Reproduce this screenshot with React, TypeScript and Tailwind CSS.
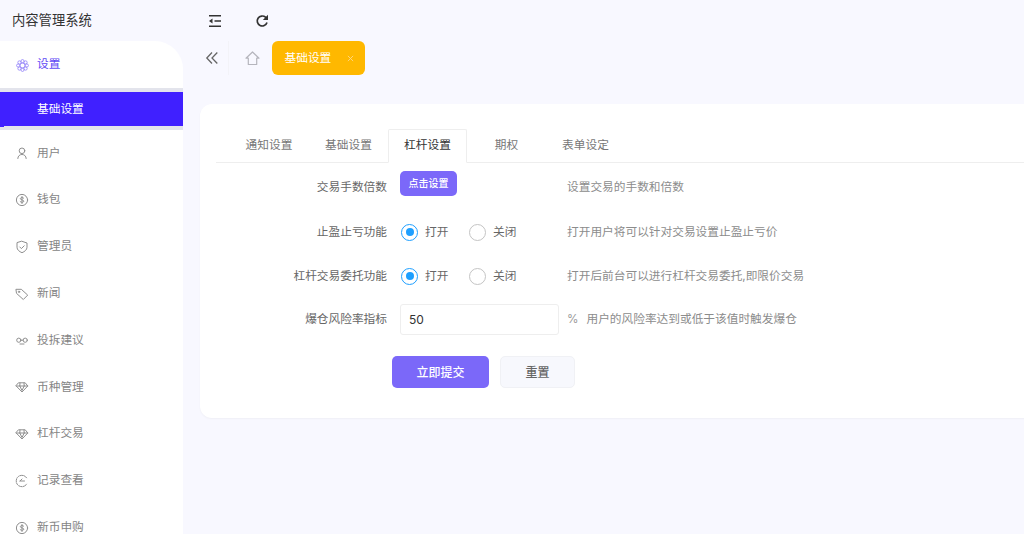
import type { ReactNode } from "react";

const s = { fill: "none", stroke: "currentColor", strokeWidth: 1, strokeLinecap: "round" as const, strokeLinejoin: "round" as const };
const Ico = ({ children, cls = "text-[#8f8f8f]" }: { children: ReactNode; cls?: string }) => (
  <svg viewBox="0 0 14 14" className={`w-[14px] h-[14px] shrink-0 ${cls}`} {...s}>{children}</svg>
);
const Dollar = () => (
  <Ico><circle cx="7" cy="7" r="5.600" /><path d="M8.800 5.200c-.4-.8-3.400-1.100-3.500.5 0 1.500 3.500.9 3.500 2.500 0 1.500-3.100 1.400-3.700.4M7 3.500v7" /></Ico>
);
const Diamond = () => (
  <Ico><path d="M3.800 2.800h6.400L12.800 6 7 12 1.200 6zM1.200 6h11.600M4.800 6 7 10.500 9.200 6M5 3 4.800 6M9 3l.2 3" /></Ico>
);

const items: { t: string; i: ReactNode }[] = [
  { t: "用户", i: <Ico><circle cx="7" cy="4.800" r="2.800" /><path d="M2.800 12.500c0-5.500 8.400-5.500 8.400 0" /></Ico> },
  { t: "钱包", i: <Dollar /> },
  { t: "管理员", i: <Ico><path d="M7 1.300 12 3v4.200c0 2.600-2.300 4.400-5 5.500-2.700-1.100-5-2.900-5-5.500V3z" /><path d="m4.800 7 1.600 1.600 2.800-2.800" /></Ico> },
  { t: "新闻", i: <Ico><path d="M1.300 2.300h5l6.400 5.800-4.400 4.400-6.500-5.900z" /><circle cx="4" cy="4.800" r=".7" /></Ico> },
  { t: "投拆建议", i: <Ico><circle cx="3.800" cy="6.200" r="2.100" /><circle cx="10.200" cy="6.200" r="2.100" /><path d="M5.900 6.200h2.200M5 10h4" /></Ico> },
  { t: "币种管理", i: <Diamond /> },
  { t: "杠杆交易", i: <Diamond /> },
  { t: "记录查看", i: <Ico><path d="M11.600 3.800A5.700 5.700 0 1 0 11.600 10.200" strokeDasharray="3 1" /><path d="M5 7h4.500M7 5 5 7" /></Ico> },
  { t: "新币申购", i: <Dollar /> },
];

const petals = [0, 45, 90, 135, 180, 225, 270, 315];

const Radio = ({ on, label }: { on?: boolean; label: string }) => (
  <label className="flex items-center">
    <span className={`w-[17px] h-[17px] rounded-full border-[1.3px] flex items-center justify-center bg-white ${on ? "border-[#1e9fff]" : "border-[#c4c4c4]"}`}>
      {on && <span className="w-[8px] h-[8px] rounded-full bg-[#1e9fff]" />}
    </span>
    <span className="ml-[7px] w-[44px] text-[#666]">{label}</span>
  </label>
);

const Row = ({ label, tip, children, cls }: { label: string; tip?: ReactNode; children: ReactNode; cls: string }) => (
  <div className={`flex items-center ${cls}`}>
    <div className="w-[171px] text-right text-[#666] shrink-0">{label}</div>
    <div className="ml-[13px] w-[167px] shrink-0 flex items-center">{children}</div>
    <div className="text-[#8c8c8c] whitespace-nowrap">{tip}</div>
  </div>
);

export default function App() {
  return (
    <div className="w-[1024px] h-[534px] overflow-hidden flex bg-[#f8f8ff] text-[11.7px] font-['Inter','Noto_Sans_CJK_SC',sans-serif]">
      <aside className="w-[183px] shrink-0 flex flex-col h-full overflow-hidden">
        <div className="h-[41px] shrink-0 pl-[12px] flex items-center text-[13.300px] text-[#333]">内容管理系统</div>
        <div className="bg-white rounded-tr-[28px] flex-1">
          <div className="h-[47px] flex items-center pl-[16px] pt-[1px] text-[#5f49f5]">
            <svg viewBox="0 0 14 14" className="w-[13px] h-[13px] shrink-0 text-[#8a78f8]" fill="none" stroke="currentColor" strokeWidth="0.800">
              <circle cx="7" cy="7" r="2.600" />
              {petals.map((a) => (
                <circle key={a} cx={7 + 4.7 * Math.cos((a * Math.PI) / 180)} cy={7 + 4.7 * Math.sin((a * Math.PI) / 180)} r="1.700" />
              ))}
            </svg>
            <span className="ml-[8px]">设置</span>
          </div>
          <div className="relative border-y-[4px] border-[#e3e4ec]">
            <div className="h-[34px] bg-[#4020ff] text-white flex items-center pl-[37px] pt-[2px]">基础设置</div>
            <span className="absolute left-0 -bottom-[1px] w-[4px] h-[1px] bg-[#4020ff]" />
          </div>
          <div className="flex flex-col">
            {items.map((x) => (
              <div key={x.t} className="h-[46.800px] shrink-0 flex items-center pl-[15px] text-[#858585]">
                {x.i}
                <span className="ml-[8px]">{x.t}</span>
              </div>
            ))}
          </div>
        </div>
      </aside>
      <main className="flex-1 min-w-0 flex flex-col">
        <div className="h-[41px] shrink-0 flex items-center pl-[25px] gap-[33px] text-[#333]">
          <svg viewBox="0 0 14 14" className="w-[14px] h-[14px]" fill="none" stroke="currentColor" strokeWidth="1.500">
            <path d="M1 1.800h12M6.500 7H13M1 12.200h12" /><path d="M4.500 4.500 1 7l3.500 2.500z" fill="currentColor" stroke="none" />
          </svg>
          <svg viewBox="0 0 14 14" className="w-[14px] h-[14px]" fill="none" stroke="currentColor" strokeWidth="1.700">
            <path d="M12 8.500A5 5 0 1 1 10.500 3.200L12 4.800" /><path d="M13 .8v5.200H7.800z" fill="currentColor" stroke="none" />
          </svg>
        </div>
        <div className="h-[34px] shrink-0 flex items-center">
          <div className="w-[46px] h-[34px] flex items-center border-r border-[#f3f3f8]">
            <svg viewBox="0 0 14 14" className="ml-[22px] w-[14px] h-[14px] text-[#666]" fill="none" stroke="currentColor" strokeWidth="1.300">
              <path d="M7 1.500 1.800 7 7 12.500M12.300 1.500 7 7l5.300 5.500" />
            </svg>
          </div>
          <svg viewBox="0 0 15 15" className="ml-[16px] w-[15px] h-[15px] text-[#b5b5bd]" fill="none" stroke="currentColor" strokeWidth="1.200" strokeLinejoin="round">
            <path d="M7.500 1 14 7.200h-2.300v6.300H3.300V7.200H1z" />
          </svg>
          <div className="ml-[12px] w-[93px] h-[34px] rounded-[6px] bg-[#ffb800] text-white flex items-center pl-[12.500px] pt-[1px]">
            基础设置
            <svg viewBox="0 0 8 8" className="ml-[16px] w-[7px] h-[7px] text-[#ffd88a]" fill="none" stroke="currentColor" strokeWidth="1"><path d="m1 1 6 6M7 1 1 7" /></svg>
          </div>
        </div>
        <div className="mt-[29px] ml-[17px] w-[900px] h-[314px] bg-white rounded-[12px] pt-[25px] pl-[16px] shadow-[0_1px_2px_rgba(0,0,0,0.04)]">
          <div className="h-[34px] flex border-b border-[#eeeeee] text-[#777]">
            {["通知设置", "基础设置", "杠杆设置", "期权", "表单设定"].map((t, i) => (
              <div
                key={t}
                className={
                  i === 2
                    ? "w-[79px] h-[34px] border border-[#eeeeee] border-b-white rounded-t-[2px] bg-white text-[#333] flex items-center justify-center"
                    : `h-[33px] flex items-center justify-center ${i === 0 ? "w-[93px] pl-[13px]" : "w-[79px]"}`
                }
              >
                {t}
              </div>
            ))}
          </div>
          <div className="flex flex-col">
            <Row label="交易手数倍数" tip="设置交易的手数和倍数" cls="h-[48px] pt-[2px]">
              <button className="w-[57px] h-[25px] -mt-[10px] rounded-[5px] bg-[#7b68f9] text-white text-[10px] font-medium">点击设置</button>
            </Row>
            <Row label="止盈止亏功能" tip="打开用户将可以针对交易设置止盈止亏价" cls="h-[43px]">
              <div className="flex items-center pl-[1px]"><Radio on label="打开" /><Radio label="关闭" /></div>
            </Row>
            <Row label="杠杆交易委托功能" tip="打开后前台可以进行杠杆交易委托,即限价交易" cls="h-[45px]">
              <div className="flex items-center pl-[1px]"><Radio on label="打开" /><Radio label="关闭" /></div>
            </Row>
            <div className="flex items-center mt-[5px] h-[31px]">
              <div className="w-[171px] text-right text-[#666] shrink-0 pt-[1px]">爆仓风险率指标</div>
              <div className="ml-[13px] w-[159px] h-[31px] shrink-0 border border-[#eeeeee] rounded-[3px] flex items-center pl-[8px] pt-[1px] text-[12px] text-[#333]">50</div>
              <div className="ml-[8px] pt-[1px] text-[#9a9a9a]">%</div>
              <div className="ml-[8px] pt-[1px] text-[#8c8c8c] whitespace-nowrap">用户的风险率达到或低于该值时触发爆仓</div>
            </div>
            <div className="flex mt-[21px] ml-[176px] gap-[11px]">
              <button className="w-[97px] h-[32px] pt-[1px] rounded-[5px] bg-[#7b68f9] text-white text-[12px] font-medium">立即提交</button>
              <button className="w-[75px] h-[32px] pt-[1px] rounded-[5px] bg-[#f7f8fd] border border-[#f0f1f5] text-[#666] text-[12px] font-medium">重置</button>
            </div>
          </div>
        </div>
      </main>
    </div>
  );
}
